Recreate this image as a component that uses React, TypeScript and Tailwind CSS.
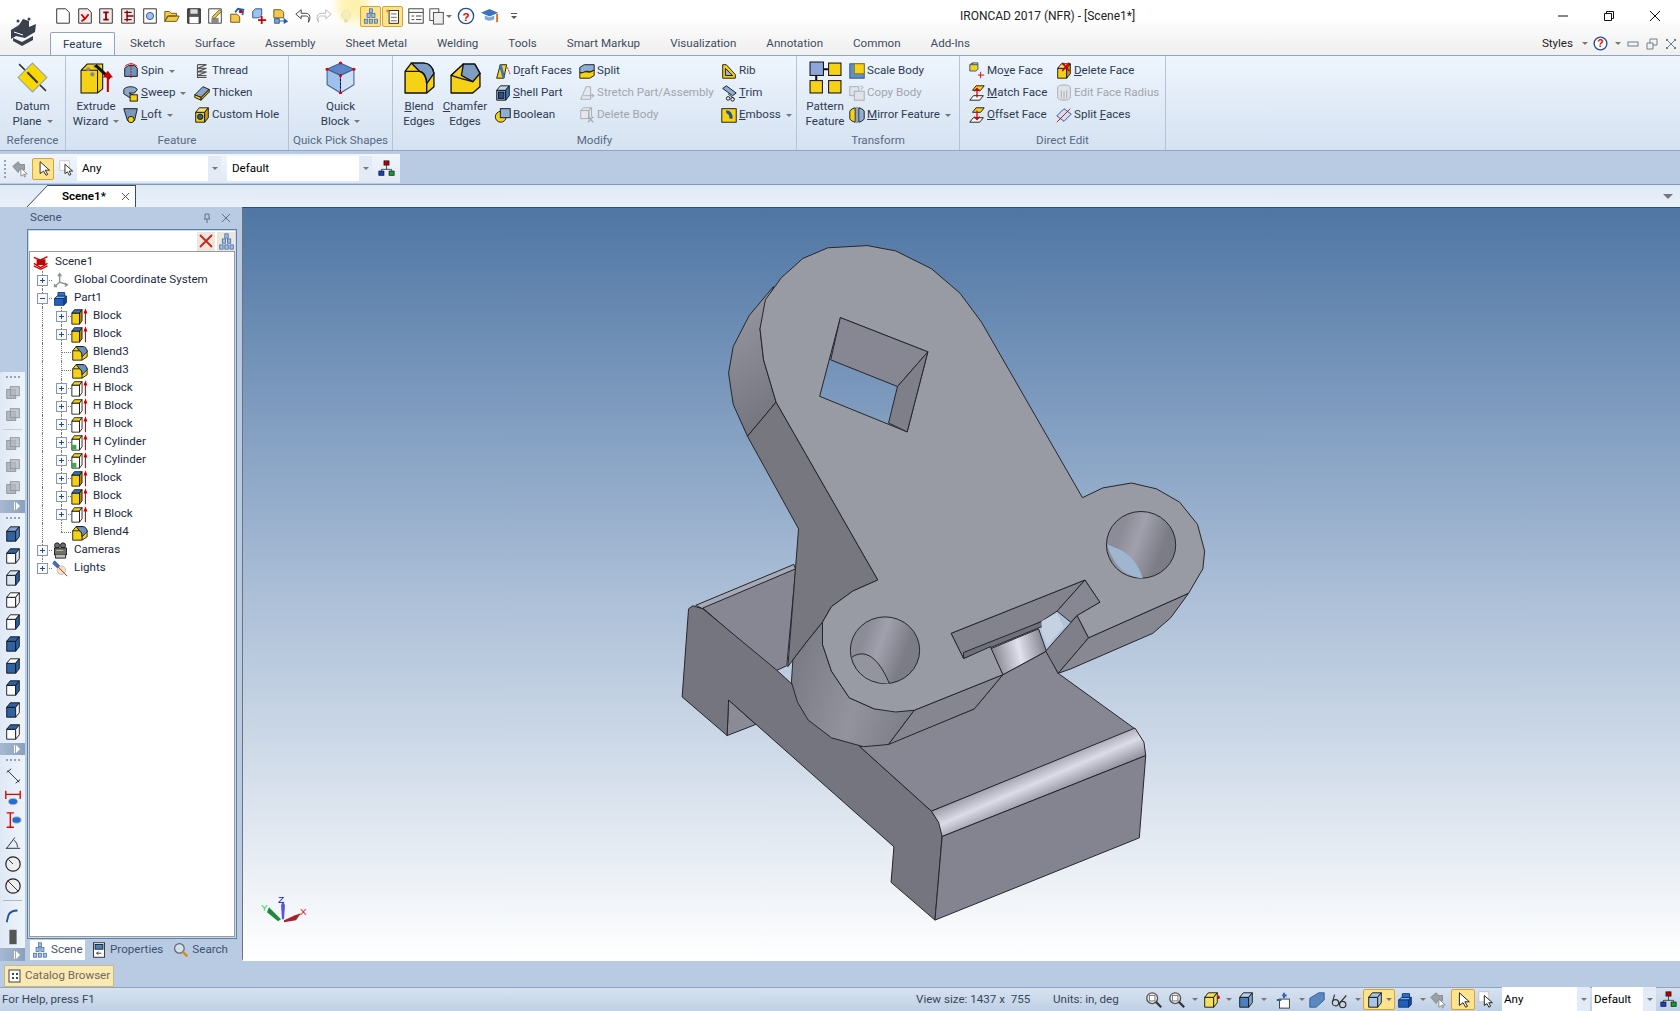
import type { ReactNode } from "react";

const Svg = ({ s = 18, v = 20, children }: { s?: number; v?: number; children: ReactNode }) => (
  <svg width={s} height={s} viewBox={`0 0 ${v} ${v}`} className="shrink-0">
    {children}
  </svg>
);

const cube = (f: string, t: string, r: string) => (
  <g stroke="#111" strokeWidth="1" strokeLinejoin="round">
    <path d="M3 7h10v11H3z" fill={f} />
    <path d="M3 7l4-5h10l-4 5z" fill={t} />
    <path d="M13 7l4-5v11l-4 5z" fill={r} />
  </g>
);

// the tall narrow box used in the scene tree
const tall = (f: string, t: string, r: string) => (
  <g stroke="#111" strokeWidth="1" strokeLinejoin="round">
    <path d="M1 6h9v13H1z" fill={f} />
    <path d="M1 6l3-4h9l-3 4z" fill={t} />
    <path d="M10 6l3-4v13l-3 4z" fill={r} />
  </g>
);

const redArrow = <path d="M17 19V5M15.500 6l1.500-4 1.500 4z" stroke="#d00000" strokeWidth="1.200" fill="#d00000" />;
const dot = (x: number, y: number) => <circle cx={x} cy={y} r="1.500" fill="#e00000" />;

const blendIco = (
  <g stroke="#111" strokeLinejoin="round">
    <path d="M2 8l4-5h8l5 5v7l-6 4H2z" fill="#f5d216" />
    <path d="M2 8h9c2 2 2 6 2 11" fill="none" />
    <path d="M6 3h8c3 0 5 3 5 6l-6 6c0-4-1-6-3-7z" fill="#6a8fb9" />
  </g>
);

const I: Record<string, ReactNode> = {
  block: <>{tall("#f5cf13", "#3a74bf", "#a98a10")}{redArrow}</>,
  hblock: <>{tall("#fff", "#f5d216", "#fff")}{redArrow}</>,
  hcyl: (
    <>
      {tall("#fff", "#f5d216", "#fff")}
      {redArrow}
      <rect x="1" y="13" width="5" height="5" fill="#2fb24a" stroke="#777" strokeWidth=".5" />
    </>
  ),
  blend: blendIco,
  spin: (
    <>
      <path d="M3 7l4-3h7l3 3v9H3z" fill="#6f93bd" stroke="#111" />
      <path d="M3 5c4-4 10-4 14 0" fill="none" stroke="#d00000" />
      <path d="M10 1v18" stroke="#d00000" strokeDasharray="2 1" />
    </>
  ),
  sweep: (
    <>
      <path d="M2 6c3-4 12-4 15 0l-3 4H8l6 3-4 3-8-5z" fill="#8fa9c9" stroke="#111" />
      <rect x="9" y="12" width="8" height="7" fill="#f5d216" stroke="#111" />
    </>
  ),
  loft: (
    <>
      <path d="M2 3h15l-3 13H6z" fill="#7a98bf" stroke="#111" />
      <circle cx="10" cy="15" r="3.500" fill="#f5d216" stroke="#111" />
    </>
  ),
  thread: (
    <g fill="none" stroke="#555" strokeWidth="1.300">
      <path d="M5 3h10L5 7h10L5 11h10L5 15h10" />
      <path d="M5 3v14h10" />
    </g>
  ),
  thicken: (
    <g stroke="#111" strokeLinejoin="round">
      <path d="M2 12l9-9 7 3-9 9z" fill="#8aa6c8" />
      <path d="M2 12l7 3v3l-7-3z" fill="#f5d216" />
      <path d="M9 15l9-9v3l-9 9z" fill="#c99f10" />
    </g>
  ),
  hole: (
    <>
      {cube("#f5cf13", "#f5e070", "#c99f10")}
      <circle cx="8" cy="12" r="3" fill="#2a5ea8" stroke="#111" />
    </>
  ),
  draft: (
    <>
      <path d="M3 18L7 3h7l-3 15z" fill="#f5d216" stroke="#111" />
      <path d="M7 3l4 15" stroke="#3a74bf" strokeWidth="3" />
      <path d="M15 6l3 8" stroke="#d00000" strokeDasharray="2 1" />
    </>
  ),
  shell: (
    <>
      {cube("#8fb0d6", "#c0d4ea", "#3a74bf")}
      <rect x="5" y="9" width="6" height="7" fill="#24508e" stroke="#111" />
    </>
  ),
  boolean: (
    <>
      <circle cx="7.500" cy="12" r="6" fill="#f5d216" stroke="#111" />
      <rect x="7" y="3" width="11" height="10" fill="#8fb0d6" stroke="#111" />
    </>
  ),
  split: (
    <g stroke="#111" strokeLinejoin="round">
      <path d="M2 6l5-3h11v6l-5 2-3-1-4 2H2z" fill="#8fb0d6" />
      <path d="M2 12c3 1 5-2 8-1s5 0 8-2v6l-5 3H2z" fill="#f5d216" />
    </g>
  ),
  stretch: (
    <g stroke="#a6aab0" fill="#e4e8ee">
      <path d="M3 17L9 3h5v14z" />
      <path d="M6 13h12M15 11l3 2-3 2" fill="none" />
    </g>
  ),
  delbody: (
    <g stroke="#a6aab0" fill="#e4e8ee">
      <path d="M3 5h9v9H3zM3 5l3-3h9l-3 3zM12 5l3-3v9l-3 3z" />
      <path d="M11 12l6 6M17 12l-6 6" fill="none" strokeWidth="1.400" />
    </g>
  ),
  rib: (
    <>
      <path d="M3 18V3l4 0 10 11v4z" fill="#f5d216" stroke="#111" />
      <path d="M6 15V7l8 8z" fill="#9fb4cd" stroke="#111" />
    </>
  ),
  trim: (
    <>
      <path d="M3 5l4-3 11 8-4 3z" fill="#8fb0d6" stroke="#111" />
      <path d="M9 11l6 5" stroke="#111" />
      <circle cx="9" cy="16" r="2" fill="none" stroke="#111" />
      <circle cx="14" cy="17" r="2" fill="none" stroke="#111" />
    </>
  ),
  emboss: (
    <>
      <rect x="2" y="3" width="16" height="15" fill="#f5d216" stroke="#111" />
      <path d="M7 7c3-1 6 3 5 7" fill="none" stroke="#24508e" strokeWidth="3.500" />
    </>
  ),
  scale: (
    <>
      <rect x="2" y="2" width="16" height="16" fill="#5f8fc6" stroke="#24508e" />
      <rect x="7" y="2" width="11" height="11" fill="#f5d216" stroke="#8a7a10" />
    </>
  ),
  copy: (
    <g stroke="#a6aab0" fill="#dfe4ea">
      <rect x="2" y="3" width="10" height="10" />
      <rect x="7" y="8" width="11" height="10" />
      <path d="M14 2l3 2-3 2" fill="none" />
    </g>
  ),
  mirror: (
    <g stroke="#111">
      <path d="M2 6c0-2 5-4 6-4v16c-1 0-6-2-6-4z" fill="#f5d216" />
      <path d="M18 6c0-2-5-4-6-4v16c1 0 6-2 6-4z" fill="#8fb0d6" />
      <path d="M10 1v18" stroke="#24508e" />
    </g>
  ),
  move: (
    <>
      <path d="M2 3l3-2h6v7l-2 2H2z" fill="#f5d216" stroke="#24508e" />
      <path d="M5 1v2H2M5 3h6" fill="none" stroke="#24508e" />
      <path d="M14 11v7M11 14.500h7" stroke="#d00000" />
    </>
  ),
  delface: (
    <>
      {cube("#f5cf13", "#f5e070", "#c99f10")}
      <path d="M8 1l8 9M16 1l-8 9" stroke="#d00000" strokeWidth="2" />
    </>
  ),
  match: (
    <>
      <path d="M5 7l4-5h9l-4 5z" fill="#f5d216" stroke="#111" />
      <path d="M2 18l4-5h11l-4 5z" fill="#fff" stroke="#111" />
      <path d="M10 5v10M7 8l3-3 3 3" stroke="#d00000" fill="none" strokeWidth="1.400" />
    </>
  ),
  offset: (
    <>
      <path d="M5 7l4-5h9l-4 5z" fill="#f5d216" stroke="#111" />
      <path d="M2 18l4-5h11l-4 5z" fill="#fff" stroke="#111" />
      <path d="M10 5v10M7 12l3 3 3-3" stroke="#d00000" fill="none" strokeWidth="1.400" />
    </>
  ),
  radius: (
    <g stroke="#a6aab0" fill="#dfe4ea">
      <ellipse cx="10" cy="4" rx="7" ry="3" />
      <path d="M3 4v11c0 4 14 4 14 0V4" />
      <path d="M7 7v9M10 8v9M13 7v9" fill="none" />
    </g>
  ),
  splitf: (
    <>
      <path d="M2 11l8-8 8 6-8 8z" fill="#d4def0" stroke="#24508e" />
      <path d="M2 18L17 3" stroke="#d00000" />
    </>
  ),
  scene: (
    <g stroke="#d00000" strokeWidth="1.600" fill="none">
      <path d="M1 4l7 3M17 3l-8 4M1 11l8 5 8-5" />
      <path d="M5 7h9v5H5z" fill="#a01010" />
      <path d="M1 14l8 4 8-4" />
    </g>
  ),
  axes: (
    <g stroke="#8a8f98" strokeWidth="1.600" fill="none">
      <path d="M9 3v9l-6 5M9 12l9 3" />
      <path d="M7 5l2-3 2 3M3 14v3h3M15 13l3 2-3 2" />
    </g>
  ),
  part: (
    <g stroke="#0f2f66" strokeLinejoin="round">
      <path d="M3 10l3-3h11l-3 3z" fill="#7fb0ea" />
      <path d="M7 7V3h8v4z" fill="#2d74d4" />
      <path d="M3 10h11v8H3z" fill="#1f5fc0" />
      <path d="M14 10l3-3v8l-3 3z" fill="#164a9a" />
    </g>
  ),
  camera: (
    <g stroke="#111" fill="#6b6f78">
      <circle cx="6" cy="4" r="3" />
      <circle cx="13" cy="4" r="3" />
      <rect x="3" y="7" width="14" height="8" />
      <path d="M5 10h8" stroke="#f5d216" />
      <path d="M4 15v4h12v-4" fill="#bbb" />
    </g>
  ),
  lights: (
    <g>
      <path d="M3 1l6 6-2 3-6-6z" fill="#3a74bf" stroke="#24508e" />
      <circle cx="11" cy="12" r="5" fill="#eee6c8" stroke="#bbb" />
      <path d="M6 7l12 12" stroke="#d00000" />
    </g>
  ),
  search: (
    <g>
      <circle cx="8" cy="8" r="6" fill="#cfe0f5" stroke="#666" strokeWidth="1.500" />
      <path d="M12 12l6 6" stroke="#d09020" strokeWidth="3" />
    </g>
  ),
  tree: (
    <g fill="#9fbde2" stroke="#2d5c9e" strokeWidth=".8">
      <rect x="8" y="1" width="4" height="5" />
      <rect x="5" y="7" width="4" height="5" />
      <rect x="11" y="7" width="4" height="5" />
      <rect x="2" y="14" width="4" height="5" />
      <rect x="8" y="14" width="4" height="5" />
      <rect x="14" y="14" width="4" height="5" />
    </g>
  ),
  props: (
    <g stroke="#111" fill="#fff">
      <rect x="3" y="1" width="14" height="18" />
      <rect x="5" y="3" width="10" height="6" fill="#4d7fc0" />
      <path d="M13 14H7M9 12l-2 2 2 2" fill="none" />
    </g>
  ),
  net: (
    <g stroke="#111" strokeWidth=".8">
      <path d="M10 6v5M4 14v-3h12v3" fill="none" />
      <rect x="7" y="1" width="6" height="5" fill="#c00000" />
      <rect x="1" y="13" width="6" height="5" fill="#1040d0" />
      <rect x="13" y="13" width="6" height="5" fill="#10a030" />
    </g>
  ),
  arrow: <path d="M6 2v14l4-3 3 5 2-1-3-5h5z" fill="#fff" stroke="#111" />,
  arrowSel: (
    <>
      <rect x="1" y="1" width="11" height="11" fill="#fff" stroke="#aaa" strokeWidth=".6" />
      <path d="M7 5v11l3-2 2 4 2-1-2-4h4z" fill="#fff" stroke="#111" />
    </>
  ),
  hand: (
    <>
      <path d="M2 7l6-5 2 3h5v6H9l-1 3z" fill="#9aa0a8" stroke="#888" />
      <path d="M11 9v9l3-2 1 3 1-.5-1-3h3z" fill="#fff" stroke="#888" />
    </>
  ),
  lens: (
    <g>
      <circle cx="8" cy="8" r="6" fill="#e9e9e9" stroke="#555" strokeWidth="1.500" />
      <rect x="5" y="5" width="6" height="6" fill="#fff" stroke="#777" />
      <path d="M12 12l6 6" stroke="#333" strokeWidth="2.500" />
    </g>
  ),
};

const qat: ReactNode[] = [
  <path d="M3 2h10l4 4v12H3z" fill="#fff" stroke="#222" />,
  <><path d="M3 2h10l4 4v12H3z" fill="#f4ecec" stroke="#222" /><path d="M6 8l4 5 4-5M10 13l-4 3" stroke="#c00" strokeWidth="2" fill="none" /></>,
  <><path d="M3 2h14v16H3z" fill="#f4ecec" stroke="#222" /><path d="M7 6h6M10 6v8M7 14h6" stroke="#800" strokeWidth="2" /></>,
  <><path d="M3 2h14v16H3z" fill="#f4ecec" stroke="#222" /><path d="M6 6h8M8 10h8M6 14h8M9 4v12" stroke="#800" strokeWidth="1.600" /></>,
  <><path d="M3 2h14v16H3z" fill="#fff" stroke="#222" /><circle cx="10" cy="10" r="4" fill="#9fc4ea" stroke="#24508e" /></>,
  <path d="M2 16V5h5l2 2h6v3H6l-4 6 3-6h13l-3 6z" fill="#f2c94c" stroke="#6a5410" />,
  <><path d="M3 2h14v16H3z" fill="#555" stroke="#111" /><rect x="6" y="2.500" width="8" height="5" fill="#ddd" /><rect x="5" y="11" width="10" height="7" fill="#fff" /></>,
  <><path d="M3 2h14v16H3z" fill="#fff" stroke="#333" /><rect x="6" y="12" width="8" height="6" fill="#888" /><path d="M7 11l8-8 2 2-8 8z" fill="#f2c94c" stroke="#6a5410" /></>,
  <><path d="M3 17V8h7l3 3v6z" fill="#f2c94c" stroke="#6a5410" /><path d="M8 6l3-4 6 1-1 6" fill="none" stroke="#1f5fc0" strokeWidth="2" /><circle cx="14" cy="5" r="2" fill="#c00" /></>,
  <><path d="M3 5l3-3h7v7l-3 3H3z" fill="#9fc4ea" stroke="#24508e" /><path d="M13 10v9M9 14.500h9" stroke="#c00" strokeWidth="2" /></>,
  <><path d="M2 12V3h8l3 3v6z" fill="#f2c94c" stroke="#6a5410" /><path d="M8 15h5v-3l5 4-5 3v-3H8z" fill="#1f5fc0" /><rect x="3" y="13" width="5" height="5" fill="#7fa7d8" stroke="#24508e" /></>,
  <path d="M8 3L2 8l6 5v-3h5c3 0 4 2 3 7 3-5 2-10-3-10H8z" fill="#fff" stroke="#333" />,
  <path d="M12 3l6 5-6 5v-3H7c-3 0-4 2-3 7-3-5-2-10 3-10h5z" fill="#fff" stroke="#b5b5b5" />,
  <><circle cx="10" cy="9" r="5" fill="#f6eeb8" stroke="#efe3a0" /><rect x="8" y="14" width="4" height="3" fill="#e6dca8" /></>,
];

const Label = ({ children, off }: { children: ReactNode; off?: boolean }) => (
  <span className={off ? "whitespace-nowrap text-[#a2a5aa]" : "whitespace-nowrap text-[#2c3b52]"}>{children}</span>
);

const Caret = () => <span className="ml-[5px] inline-block border-x-[3px] border-t-[3px] border-x-transparent border-t-[#777] align-middle" />;

const Row = ({ icon, children, off, caret }: { icon: string; children: ReactNode; off?: boolean; caret?: boolean }) => (
  <div className="flex h-[22px] items-center">
    <span className="flex w-[19px] shrink-0">
      <Svg>{I[icon]}</Svg>
    </span>
    <Label off={off}>{children}</Label>
    {caret && <Caret />}
  </div>
);

const Big = ({ icon, a, b, w, caret }: { icon: ReactNode; a: ReactNode; b: ReactNode; w: string; caret?: boolean }) => (
  <div className={`flex flex-col items-center ${w}`}>
    <div className="flex h-[43px] items-start pt-[5px]">
      <Svg s={33} v={32}>{icon}</Svg>
    </div>
    <div className="flex flex-col items-center leading-[15px] text-[#2c3b52]">
      <span className="whitespace-nowrap">{a}</span>
      <span className="whitespace-nowrap">{b}{caret && <Caret />}</span>
    </div>
  </div>
);

const Group = ({ title, w, children }: { title: string; w: string; children: ReactNode }) => (
  <div className={`flex h-full shrink-0 flex-col border-r border-[#b3c4d9] ${w}`}>
    <div className="flex flex-1">{children}</div>
    <div className="h-[18px] pb-[1px] text-center leading-[16px] text-[#566a85]">{title}</div>
  </div>
);

const tabs = ["Sketch", "Surface", "Assembly", "Sheet Metal", "Welding", "Tools", "Smart Markup", "Visualization", "Annotation", "Common", "Add-Ins"];

const Combo = ({ label, w, pad = "pl-[5px]" }: { label: string; w: string; pad?: string }) => (
  <div className={`flex h-[25px] shrink-0 items-center bg-white text-black ${pad} ${w}`}>
    <span className="flex-1">{label}</span>
    <span className="flex h-full w-[13px] items-center justify-center bg-[#e3ecf6]">
      <span className="border-x-[3px] border-t-[3px] border-x-transparent border-t-[#777]" />
    </span>
  </div>
);

type Node = { d: number; i: string; t: string; x?: "+" | "-" | ""; last?: boolean };

const nodes: Node[] = [
  { d: 0, i: "scene", t: "Scene1" },
  { d: 1, i: "axes", t: "Global Coordinate System", x: "+" },
  { d: 1, i: "part", t: "Part1", x: "-" },
  { d: 2, i: "block", t: "Block", x: "+" },
  { d: 2, i: "block", t: "Block", x: "+" },
  { d: 2, i: "blend", t: "Blend3", x: "" },
  { d: 2, i: "blend", t: "Blend3", x: "" },
  { d: 2, i: "hblock", t: "H Block", x: "+" },
  { d: 2, i: "hblock", t: "H Block", x: "+" },
  { d: 2, i: "hblock", t: "H Block", x: "+" },
  { d: 2, i: "hcyl", t: "H Cylinder", x: "+" },
  { d: 2, i: "hcyl", t: "H Cylinder", x: "+" },
  { d: 2, i: "block", t: "Block", x: "+" },
  { d: 2, i: "block", t: "Block", x: "+" },
  { d: 2, i: "hblock", t: "H Block", x: "+" },
  { d: 2, i: "blend", t: "Blend4", x: "", last: true },
  { d: 1, i: "camera", t: "Cameras", x: "+" },
  { d: 1, i: "lights", t: "Lights", x: "+", last: true },
];

const Guide = () => (
  <span className="h-full w-[19px] shrink-0 pl-[9px]">
    <span className="block h-full border-l border-dotted border-[#777]" />
  </span>
);

const Toggle = ({ x, last }: { x: string; last?: boolean }) => (
  <span className="relative flex h-full w-[19px] shrink-0 items-center">
    <span className={`absolute left-[9px] top-0 border-l border-dotted border-[#777] ${last ? "h-[9px]" : "h-full"}`} />
    <span className="absolute left-[9px] top-[9px] w-[10px] border-t border-dotted border-[#777]" />
    {x && (
      <span className="absolute left-[4px] top-[4px] flex h-[11px] w-[11px] items-center justify-center border border-[#8b98a8] bg-[#f6f8fb] text-[#2b4a80]">
        <span className="absolute h-px w-[5px] bg-[#2b4a80]" />
        {x === "+" && <span className="absolute h-[5px] w-px bg-[#2b4a80]" />}
      </span>
    )}
  </span>
);

const TreeRow = ({ n }: { n: Node }) => (
  <div className="flex h-[18px] items-center">
    {n.d === 2 && <Guide />}
    {n.d > 0 && <Toggle x={n.x ?? ""} last={n.last} />}
    <span className="flex w-[17px] shrink-0">
      <Svg s={17}>{I[n.i]}</Svg>
    </span>
    <span className="ml-[5px] whitespace-nowrap text-[#1c2a44]">{n.t}</span>
  </div>
);

const Grip = () => (
  <div className="flex h-[10px] items-center justify-center gap-[2px]">
    {[0, 1, 2, 3].map((i) => (
      <span key={i} className="h-[2px] w-[2px] bg-[#8fa4c0]" />
    ))}
  </div>
);

const Handle = () => (
  <div className="flex h-[14px] items-center justify-end bg-linear-to-r from-[#a7b9d1] to-[#8aa0bd] pr-[5px]">
    <span className="h-[8px] w-px bg-white" />
    <span className="ml-px border-y-[4px] border-l-[4px] border-y-transparent border-l-white" />
  </div>
);

const Tool = ({ children }: { children: ReactNode }) => (
  <div className="flex h-[22px] items-center justify-center">
    <Svg s={18}>{children}</Svg>
  </div>
);

const grayCube = (
  <g stroke="#8d939b" fill="#b4b9bf">
    <rect x="3" y="6" width="10" height="10" />
    <rect x="7" y="3" width="10" height="10" fillOpacity=".7" />
  </g>
);

const blueFace = (k: number) => {
  const faces = [
    ["#2d62a5", "#7fa6d4", "#4b7fbd"],
    ["#fff", "#2d62a5", "#dbe6f3"],
    ["#dbe6f3", "#dbe6f3", "#2d62a5"],
    ["#fff", "#fff", "#fff"],
    ["#fff", "#fff", "#2d62a5"],
    ["#2d62a5", "#2d62a5", "#2d62a5"],
    ["#2d62a5", "#fff", "#2d62a5"],
    ["#fff", "#2d62a5", "#2d62a5"],
    ["#2d62a5", "#2d62a5", "#fff"],
    ["#fff", "#2d62a5", "#fff"],
  ][k];
  return cube(faces[0], faces[1], faces[2]);
};

const dims: ReactNode[] = [
  <path d="M3 6l5-4M4 4l13 13M13 18l5-4" stroke="#222" fill="none" />,
  <><path d="M2 2v9M18 2v9M2 6h16" stroke="#e00000" strokeWidth="1.500" /><ellipse cx="10" cy="14" rx="5" ry="3.500" fill="#1f6fd4" stroke="#bbb" /></>,
  <><path d="M3 2h8M3 18h8M7 2v16" stroke="#e00000" strokeWidth="1.500" /><ellipse cx="14" cy="10" rx="5" ry="3.500" fill="#1f6fd4" stroke="#bbb" /></>,
  <path d="M2 17h16M3 17L12 5M11 8c3 2 4 5 4 8" stroke="#222" fill="none" />,
  <><circle cx="10" cy="10" r="8" fill="#eee" stroke="#222" strokeWidth="1.300" /><path d="M10 10L5 5" stroke="#222" /></>,
  <><circle cx="10" cy="10" r="8" fill="#eee" stroke="#222" strokeWidth="1.300" /><path d="M4 4l12 12" stroke="#222" /></>,
];

const bottomIcons: { c: ReactNode; w: string; caret?: boolean; on?: boolean }[] = [
  { c: I.lens, w: "w-[23px]" },
  { c: I.lens, w: "w-[34px]", caret: true },
  { c: <>{cube("#f5e25a", "#f5e25a", "#f5e25a")}<path d="M17 7h3M18.500 5v4" stroke="#e00000" strokeWidth="1.500" /></>, w: "w-[35px]", caret: true },
  { c: cube("#4b7fbd", "#b9d0ea", "#86a9d3"), w: "w-[38px]", caret: true },
  { c: <><rect x="5" y="9" width="11" height="10" fill="#fff" stroke="#333" /><path d="M8 5h5M10 2v6M2 10h5" stroke="#2d62a5" strokeWidth="2" /></>, w: "w-[33px]", caret: true },
  { c: <path d="M2 18V8l10-6h6v8L9 18z" fill="#5b89bf" stroke="#2d5c9e" />, w: "w-[23px]" },
  { c: <g fill="none" stroke="#333" strokeWidth="1.300"><circle cx="5" cy="13" r="3.500" /><circle cx="13" cy="15" r="3.500" /><path d="M2 11l2-7M9 14l8-9" /></g>, w: "w-[32px]", caret: true },
  { c: cube("#a8c4e6", "#a8c4e6", "#a8c4e6"), w: "w-[33px]", caret: true, on: true },
  { c: I.part, w: "w-[33px]", caret: true },
  { c: I.hand, w: "w-[22px]" },
  { c: I.arrow, w: "w-[27px]", on: true },
  { c: I.arrowSel, w: "w-[22px]" },
];

const M = "#74757f";
const plate =
  "M280 220L295 155 340 105 400 62 470 38 580 33 660 45 760 85 840 140 900 205 1183 600 1240 578 1320 567 1390 580 1455 610 1505 660 1525 720 1520 760 1480 815 1200 915 1168 865 1232 835 1190 785 815 905 850 962 925 935 960 998 712 1078 660 1082 600 1075 530 1050 480 990 455 930 455 880 480 845 540 810 610 785 325 385 290 290Z M505 195L750 272 692 452 447 372Z";

const Model = () => (
  <svg viewBox="243 207 1437 754" preserveAspectRatio="none" className="block h-full w-full">
    <defs>
      <linearGradient id="roll" gradientUnits="userSpaceOnUse" x1="1040" y1="1190" x2="1075" y2="1290">
        <stop offset="0" stopColor="#80818c" />
        <stop offset=".5" stopColor="#dcdce8" />
        <stop offset="1" stopColor="#7c7d88" />
      </linearGradient>
      <linearGradient id="roll2" gradientUnits="userSpaceOnUse" x1="930" y1="960" x2="1080" y2="920">
        <stop offset="0" stopColor="#80818c" />
        <stop offset=".5" stopColor="#e2e2ee" />
        <stop offset="1" stopColor="#7c7d88" />
      </linearGradient>
      <linearGradient id="lobe" gradientUnits="userSpaceOnUse" x1="200" y1="200" x2="320" y2="420">
        <stop offset="0" stopColor="#92939d" />
        <stop offset="1" stopColor="#74757f" />
      </linearGradient>
      <linearGradient id="boss" gradientUnits="userSpaceOnUse" x1="380" y1="1000" x2="680" y2="1120">
        <stop offset="0" stopColor="#7c7d87" />
        <stop offset=".55" stopColor="#92939d" />
        <stop offset="1" stopColor="#7e7f89" />
      </linearGradient>
      <linearGradient id="bore" gradientUnits="userSpaceOnUse" x1="1290" y1="680" x2="1400" y2="730">
        <stop offset="0" stopColor="#8b8c97" />
        <stop offset=".4" stopColor="#a0a1ac" />
        <stop offset="1" stopColor="#7b7c86" />
      </linearGradient>
      <linearGradient id="bore2" gradientUnits="userSpaceOnUse" x1="570" y1="915" x2="680" y2="965">
        <stop offset="0" stopColor="#8b8c97" />
        <stop offset=".4" stopColor="#a0a1ac" />
        <stop offset="1" stopColor="#7b7c86" />
      </linearGradient>
    </defs>
    <g transform="translate(660 230) scale(0.35714 0.44643)" stroke="#26262c" strokeWidth="1" strokeLinejoin="round">
      <polygon vectorEffect="non-scaling-stroke" fill="#a7a9b6" points="100,842 375,750 380,762 120,850" />
      <polygon vectorEffect="non-scaling-stroke" fill="#868792" points="120,848 380,760 355,978 322,990" />
      <polygon vectorEffect="non-scaling-stroke" fill="#8a8b96" points="192,1055 268,1110 188,1135" />
      <polygon vectorEffect="non-scaling-stroke" fill={M} points="92,843 120,850 330,990 560,1160 760,1305 785,1335 790,1360 770,1550 647,1465 655,1385 192,1055 188,1135 62,1048 80,850" />
      <polygon vectorEffect="non-scaling-stroke" fill="#868792" points="560,1160 650,1150 880,1075 960,998 1082,945 1115,995 1330,1120 760,1305" />
      <polygon vectorEffect="non-scaling-stroke" fill="url(#roll)" points="760,1305 1330,1118 1355,1150 1360,1180 790,1362 780,1330" />
      <polygon vectorEffect="non-scaling-stroke" fill="#83848f" points="790,1362 1360,1180 1342,1365 770,1550" />
      <polygon vectorEffect="non-scaling-stroke" fill="url(#lobe)" points="318,125 280,220 290,290 325,385 245,462 205,390 192,320 205,260 250,190" />
      <polygon vectorEffect="non-scaling-stroke" fill="#76777f" points="325,385 610,785 540,810 480,845 455,880 410,925 372,965 358,980 388,670 245,462" />
      <polygon vectorEffect="non-scaling-stroke" fill="url(#boss)" points="372,965 368,1015 385,1060 415,1100 480,1140 570,1160 640,1155 712,1078 600,1075 530,1050 480,990 455,930 455,880 410,925" />
      <polygon vectorEffect="non-scaling-stroke" fill="#858690" points="640,1155 880,1075 960,998 712,1078" />
      <polygon vectorEffect="non-scaling-stroke" fill="#82838d" points="815,905 1190,785 1112,855 1068,878 850,962" />
      <polygon vectorEffect="non-scaling-stroke" fill="#6f7079" points="850,948 1070,878 1075,888 850,962" />
      <polygon vectorEffect="non-scaling-stroke" fill="url(#roll2)" points="925,940 1060,895 1082,945 960,998" />
      <polygon fill="#c6d2e2" stroke="none" points="1068,878 1112,860 1130,890 1085,930 1070,905" />
      <polygon vectorEffect="non-scaling-stroke" fill="#868792" points="1112,855 1190,785 1232,835 1168,865 1150,880" />
      <polygon vectorEffect="non-scaling-stroke" fill="#7e7f89" points="1080,945 1168,865 1200,915 1115,995" />
      <polygon vectorEffect="non-scaling-stroke" fill="#878892" points="1200,915 1480,815 1430,870 1380,905 1150,985 1115,995" />
      <path vectorEffect="non-scaling-stroke" fill="#989aa4" fillRule="evenodd" d={plate} />
      <polygon vectorEffect="non-scaling-stroke" fill="#868792" points="505,195 750,272 665,350 478,290" />
      <polygon vectorEffect="non-scaling-stroke" fill="#7e7f89" points="750,272 692,452 640,432 665,350" />
      <ellipse vectorEffect="non-scaling-stroke" cx="1347" cy="706" rx="97" ry="75" fill="url(#bore)" />
      <path fill="#9fb6d1" stroke="none" d="M1252 705C1285 715 1330 725 1352 781 1305 778 1268 750 1252 705Z" />
      <ellipse vectorEffect="non-scaling-stroke" cx="630" cy="943" rx="97" ry="75" fill="url(#bore2)" />
      <path fill="#93949e" stroke="none" d="M538 958C585 935 620 975 642 1018 600 1018 555 998 538 958Z" />
      <path vectorEffect="non-scaling-stroke" fill="none" d="M538 958C585 935 620 975 642 1018" />
    </g>
    <g>
      <path d="M282 921l-1-14 2-4 2 4-1 14z" fill="#5a55d8" />
      <path d="M281 921l-12-12-2 5 11 9z" fill="#1f8a3c" />
      <path d="M284 922l11-5 6-2-5 7-12 2z" fill="#a8242c" />
      <text x="278" y="905" fontSize="10" fill="#0a14e0" fontFamily="'Liberation Sans', sans-serif">Z</text>
      <text x="261" y="913" fontSize="10" fill="#10e040" fontFamily="'Liberation Sans', sans-serif">Y</text>
      <text x="300" y="917" fontSize="10" fill="#e02020" fontFamily="'Liberation Sans', sans-serif">X</text>
    </g>
  </svg>
);

export default function App() {
  return (
    <div className="flex h-[1011px] w-[1680px] flex-col overflow-hidden bg-[#b9cbe3] text-[11.600px] font-['Roboto',sans-serif]">
      {/* title + tabs */}
      <div className="flex h-[55px] shrink-0 bg-linear-to-b from-white from-30% to-[#f1f1f1] to-90%">
        <div className="w-[50px] shrink-0 pl-[10px] pt-[16px]">
          <svg width="28" height="30" viewBox="0 0 28 30">
            <path d="M1 14l8-5 4-6 6 2v6l7-3-1 8-10 6-9-2-5 3z" fill="#39414c" />
            <path d="M3 22l9 4 11-6v4l-11 6-9-5z" fill="#39414c" />
            <circle cx="8" cy="5" r="1.500" fill="#39414c" />
            <circle cx="19" cy="3" r="1.500" fill="#39414c" />
            <path d="M4 16l9 3" stroke="#fff" />
          </svg>
        </div>
        <div className="flex flex-1 flex-col">
          <div className="flex h-[32px] items-center">
            <div className="relative flex w-[482px] shrink-0 items-center pl-[2px]">
              <span className="absolute left-[287px] top-[-16px] h-[32px] w-[32px] rounded-full bg-[#fff2b0] blur-[5px]" />
              {qat.map((q, i) => (
                <span key={i} className="relative flex w-[21.800px] shrink-0 justify-center">
                  <Svg s={18}>{q}</Svg>
                </span>
              ))}
              <span className="relative ml-[3px] flex h-[21px] w-[21px] items-center justify-center rounded-[2px] border border-[#d9a52e] bg-[#fde38d]">
                <Svg s={16}>{I.tree}</Svg>
              </span>
              <span className="relative ml-[1px] flex h-[21px] w-[21px] items-center justify-center rounded-[2px] border border-[#d9a52e] bg-[#fde38d]">
                <Svg s={17}>
                  <rect x="6" y="3" width="11" height="15" fill="#fff" stroke="#111" />
                  <path d="M8 7h7M8 11h7M8 15h7" stroke="#555" />
                  <path d="M3 2l3 3M6 2L3 5" stroke="#d09020" strokeWidth="1.500" />
                </Svg>
              </span>
              <span className="relative ml-[2px] flex w-[21px] justify-center">
                <Svg s={18}>
                  <rect x="2" y="2" width="16" height="16" fill="#fff" stroke="#333" />
                  <path d="M2 6h16M5 10h3M10 10h6M5 14h3M10 14h6" stroke="#333" />
                </Svg>
              </span>
              <span className="relative ml-[2px] flex items-center">
                <Svg s={18}>
                  <rect x="2" y="2" width="10" height="13" fill="#fff" stroke="#444" />
                  <rect x="6" y="6" width="11" height="13" fill="#eee" stroke="#444" />
                </Svg>
                <span className="border-x-[3px] border-t-[3px] border-x-transparent border-t-[#777]" />
              </span>
              <span className="relative ml-[5px] flex">
                <Svg s={18}>
                  <circle cx="10" cy="10" r="8.500" fill="#fff" stroke="#24508e" strokeWidth="1.500" />
                  <text x="10" y="15" fontSize="13" fontWeight="700" textAnchor="middle" fill="#e00000" fontFamily="'Liberation Sans', sans-serif">?</text>
                </Svg>
              </span>
              <span className="relative ml-[5px] flex">
                <Svg s={19}>
                  <path d="M1 6l9-4 9 4-9 4z" fill="#3a74bf" />
                  <path d="M5 9v4c3 2 7 2 10 0V9l-5 2z" fill="#7fa7d8" />
                  <path d="M18 7v9" stroke="#e07020" strokeWidth="2" />
                </Svg>
              </span>
              <span className="relative ml-[12px] flex flex-col items-center gap-[2px]">
                <span className="h-px w-[6px] bg-[#555]" />
                <span className="border-x-[3px] border-t-[3px] border-x-transparent border-t-[#555]" />
              </span>
            </div>
            <div className="ml-[428px] w-[175px] whitespace-nowrap text-[12px] text-[#222]">IRONCAD 2017 (NFR) - [Scene1*]</div>
            <div className="ml-auto flex items-center text-[#111]">
              <svg width="14" height="14" viewBox="0 0 14 14" className="mr-[32px]"><path d="M2 7h10" stroke="#111" /></svg>
              <svg width="14" height="14" viewBox="0 0 14 14" className="mr-[32px]"><path d="M2.500 4.500h7v7h-7zM4.500 4.500v-2h7v7h-2" fill="none" stroke="#111" /></svg>
              <svg width="14" height="14" viewBox="0 0 14 14" className="mr-[18px]"><path d="M2 2l10 10M12 2L2 12" stroke="#111" /></svg>
            </div>
          </div>
          <div className="flex h-[23px]">
            <div className="flex h-[24px] w-[65px] items-center justify-center rounded-t-[2px] border border-b-0 border-[#8ea5c3] bg-linear-to-b from-white to-[#eef5fd] text-[#2c3b52]">Feature</div>
            {tabs.map((t) => (
              <div key={t} className="flex items-center px-[15px] whitespace-nowrap text-[#3d4c61]">{t}</div>
            ))}
            <div className="ml-auto flex items-center pr-[3px]">
              <span className="text-[#222]">Styles</span>
              <span className="ml-[9px] border-x-[3px] border-t-[3px] border-x-transparent border-t-[#777]" />
              <span className="ml-[5px] flex">
                <Svg s={15}>
                  <circle cx="10" cy="10" r="8.500" fill="#fff" stroke="#24508e" strokeWidth="1.800" />
                  <text x="10" y="15" fontSize="14" fontWeight="700" textAnchor="middle" fill="#e00000" fontFamily="'Liberation Sans', sans-serif">?</text>
                </Svg>
              </span>
              <span className="ml-[7px] border-x-[3px] border-t-[3px] border-x-transparent border-t-[#777]" />
              <svg width="12" height="12" viewBox="0 0 12 12" className="ml-[6px]"><rect x="1" y="4" width="10" height="4" fill="none" stroke="#6f7f92" /></svg>
              <svg width="12" height="12" viewBox="0 0 12 12" className="ml-[7px]"><path d="M1 5h6v6H1zM4 5V1h7v6H7" fill="none" stroke="#6f7f92" /></svg>
              <svg width="12" height="12" viewBox="0 0 12 12" className="ml-[7px]"><path d="M1 1l10 10M11 1L1 11M1 3l2-2M9 1l2 2M1 9l2 2M11 9l-2 2" fill="none" stroke="#6f7f92" /></svg>
            </div>
          </div>
        </div>
      </div>

      {/* ribbon */}
      <div className="flex h-[96px] shrink-0 border-y border-[#8ea5c3] bg-linear-to-b from-[#eef5fd] to-[#d5e2f1]">
        <Group title="Reference" w="w-[66px]">
          <Big
            w="w-full"
            a="Datum"
            b="Plane"
            caret
            icon={
              <>
                <path d="M3 3l26 26" stroke="#333" strokeWidth="1.500" />
                <path d="M16 2l14 14-14 14L2 16z" fill="#f8d800" stroke="#8aa0bb" />
                <path d="M11 11l10 10" stroke="#333" strokeWidth="2" />
              </>
            }
          />
        </Group>
        <Group title="Feature" w="w-[223px]">
          <Big
            w="ml-[4px] w-[52px]"
            a="Extrude"
            b="Wizard"
            caret
            icon={
              <>
                <path d="M1 9l6-6h15v24l-5 4H1z" fill="#f5d216" stroke="#111" />
                <path d="M1 9h16v22" fill="none" stroke="#111" />
                <circle cx="8" cy="8" r="2" fill="#888" />
                <circle cx="15" cy="5" r="2" fill="#888" />
                <circle cx="12" cy="13" r="2" fill="#888" />
                <path d="M15 4l14 13" stroke="#111" strokeWidth="3" />
                <path d="M27 30V12M24 15l3-4 3 4z" stroke="#d00000" strokeWidth="2" fill="#d00000" />
              </>
            }
          />
          <div className="w-[71px] pt-[4px]">
            <Row icon="spin" caret>Spin</Row>
            <Row icon="sweep" caret><u>S</u>weep</Row>
            <Row icon="loft" caret><u>L</u>oft</Row>
          </div>
          <div className="pt-[4px]">
            <Row icon="thread">Thread</Row>
            <Row icon="thicken">Thicken</Row>
            <Row icon="hole">Custom Hole</Row>
          </div>
        </Group>
        <Group title="Quick Pick Shapes" w="w-[104px]">
          <Big
            w="w-full"
            a="Quick"
            b="Block"
            caret
            icon={
              <>
                <path d="M3 8l13-6 13 6-13 6z" fill="#5f86c9" stroke="#3a5f96" />
                <path d="M3 8v15l13 8V14z" fill="#9fc0ea" stroke="#3a5f96" />
                <path d="M29 8v15l-13 8V14z" fill="#cfe0f5" stroke="#3a5f96" />
                <path d="M16 14v17" stroke="#111" strokeDasharray="2 1.500" />
                {dot(3, 8)}{dot(16, 2)}{dot(29, 8)}{dot(16, 14)}{dot(16, 31)}
              </>
            }
          />
        </Group>
        <Group title="Modify" w="w-[404px]">
          <Big
            w="ml-[3px] w-[46px]"
            a={<><u>B</u>lend</>}
            b="Edges"
            icon={
              <g stroke="#111" strokeWidth="1.300" strokeLinejoin="round">
                <path d="M2 10l6-8h12c5 0 9 4 10 10v13l-7 6H2z" fill="#f5d216" />
                <path d="M2 10h14c4 1 7 6 7 12v9" fill="#f5d216" />
                <path d="M8 2h12c6 0 9 5 10 10l-7 10c0-7-3-12-7-12z" fill="#7f9dc2" />
              </g>
            }
          />
          <Big
            w="w-[46px]"
            a={<><u>C</u>hamfer</>}
            b="Edges"
            icon={
              <g stroke="#111" strokeWidth="1.300" strokeLinejoin="round">
                <path d="M2 14v17h21l7-6V12l-5-9H14z" fill="#f5d216" />
                <path d="M2 14l12-11 9 5 7 4-7 8-11-3z" fill="#f5d216" />
                <path d="M14 3h11l5 9-7 8-11-6z" fill="#7f9dc2" />
              </g>
            }
          />
          <div className="ml-[6px] w-[84px] pt-[4px]">
            <Row icon="draft">D<u>r</u>aft Faces</Row>
            <Row icon="shell"><u>S</u>hell Part</Row>
            <Row icon="boolean">Boolean</Row>
          </div>
          <div className="w-[142px] pt-[4px]">
            <Row icon="split">Split</Row>
            <Row icon="stretch" off>Stretch Part/Assembly</Row>
            <Row icon="delbody" off>Delete Body</Row>
          </div>
          <div className="pt-[4px]">
            <Row icon="rib">Rib</Row>
            <Row icon="trim"><u>T</u>rim</Row>
            <Row icon="emboss" caret><u>E</u>mboss</Row>
          </div>
        </Group>
        <Group title="Transform" w="w-[163px]">
          <Big
            w="ml-[5px] w-[46px]"
            a="Pattern"
            b="Feature"
            icon={
              <g stroke="#111">
                <path d="M13 8h6M7 14v5" strokeWidth="2" />
                <rect x="1" y="1" width="13" height="13" fill="#8fa7d8" />
                <rect x="19" y="2" width="12" height="12" fill="#f5d216" />
                <rect x="1" y="19" width="12" height="12" fill="#f5d216" />
                <rect x="19" y="19" width="12" height="12" fill="#f5d216" />
              </g>
            }
          />
          <div className="pt-[4px]">
            <Row icon="scale">Scale Body</Row>
            <Row icon="copy" off>Copy Body</Row>
            <Row icon="mirror" caret><u>M</u>irror Feature</Row>
          </div>
        </Group>
        <Group title="Direct Edit" w="w-[206px]">
          <div className="ml-[8px] w-[87px] pt-[4px]">
            <Row icon="move">Mo<u>v</u>e Face</Row>
            <Row icon="match"><u>M</u>atch Face</Row>
            <Row icon="offset"><u>O</u>ffset Face</Row>
          </div>
          <div className="pt-[4px]">
            <Row icon="delface"><u>D</u>elete Face</Row>
            <Row icon="radius" off>Edit Face Radius</Row>
            <Row icon="splitf">Split <u>F</u>aces</Row>
          </div>
        </Group>
      </div>

      {/* selection toolbar */}
      <div className="flex h-[33px] shrink-0 pt-[3px]">
        <div className="flex h-[29px] w-[400px] items-center bg-linear-to-b from-[#f1f6fc] to-[#dfe9f5]">
          <div className="ml-[4px] flex flex-col gap-[2px]">
            {[0, 1, 2, 3, 4].map((i) => (
              <span key={i} className="h-[2px] w-[2px] bg-[#8fa4c0]" />
            ))}
          </div>
          <span className="ml-[5px] flex"><Svg s={18}>{I.hand}</Svg></span>
          <span className="ml-[3px] flex h-[22px] w-[22px] items-center justify-center rounded-[2px] border border-[#d9a52e] bg-[#fde38d]"><Svg s={17}>{I.arrow}</Svg></span>
          <span className="ml-[5px] flex"><Svg s={17}>{I.arrowSel}</Svg></span>
          <Combo label="Any" w="ml-[1px] w-[144px]" />
          <Combo label="Default" w="ml-[6px] w-[145px]" />
          <span className="ml-[6px] flex"><Svg s={17}>{I.net}</Svg></span>
        </div>
      </div>

      {/* document tabs */}
      <div className="flex h-[23px] shrink-0 border-t border-[#7f98b8] bg-linear-to-b from-[#dfe9f5] to-[#e9f1fa]">
        <div className="ml-[27px] flex h-[22px] w-[109px]">
          <svg width="21" height="22" viewBox="0 0 21 22" className="shrink-0">
            <path d="M0 22L21 0v22z" fill="#fff" />
            <path d="M0 22L21 0" stroke="#3d4c61" fill="none" />
          </svg>
          <div className="flex flex-1 items-center border-r border-t border-[#3d4c61] bg-white pl-[14px]">
            <span className="w-[59px] font-semibold whitespace-nowrap text-black">Scene1*</span>
            <svg width="9" height="9" viewBox="0 0 9 9"><path d="M1 1l7 7M8 1L1 8" stroke="#555" /></svg>
          </div>
        </div>
        <span className="ml-auto mr-[7px] mt-[9px] h-0 border-x-[5px] border-t-[5px] border-x-transparent border-t-[#777]" />
      </div>

      {/* main */}
      <div className="flex min-h-0 flex-1">
        <div className="flex w-[25px] shrink-0 flex-col pt-[165px]">
          <div className="rounded-tl-[2px] bg-linear-to-r from-[#dfe9f5] to-[#eef4fb]">
            <Grip />
            <Tool>{grayCube}</Tool>
            <Tool>{grayCube}</Tool>
            <div className="mx-[3px] my-[3px] h-px bg-[#c2cedd]" />
            <Tool>{grayCube}</Tool>
            <Tool>{grayCube}</Tool>
            <Tool>{grayCube}</Tool>
            <div className="h-[1px]" />
          </div>
          <Handle />
          <div className="bg-linear-to-r from-[#dfe9f5] to-[#eef4fb]">
            <Grip />
            {[0, 1, 2, 3, 4, 5, 6, 7, 8, 9].map((k) => (
              <Tool key={k}>{blueFace(k)}</Tool>
            ))}
          </div>
          <Handle />
          <div className="bg-linear-to-r from-[#dfe9f5] to-[#eef4fb]">
            <Grip />
            {dims.map((d, k) => (
              <Tool key={k}>{d}</Tool>
            ))}
            <div className="mx-[3px] my-[3px] h-px bg-[#aab8c9]" />
            <Tool><path d="M3 18l2-8c2-4 6-5 10-5" fill="none" stroke="#24508e" strokeWidth="2" /></Tool>
            <Tool><rect x="6" y="2" width="8" height="16" fill="#555" /></Tool>
          </div>
          <Handle />
        </div>
        <div className="ml-[2px] flex w-[210px] shrink-0 flex-col">
          <div className="flex h-[22px] shrink-0 items-center pl-[3px] text-[#3e5270]">
            <span className="flex-1">Scene</span>
            <svg width="10" height="10" viewBox="0 0 10 10" className="mr-[9px]"><path d="M3 1h4v4l1 1H2l1-1zM5 6v4" fill="none" stroke="#5f6f84" /></svg>
            <svg width="10" height="10" viewBox="0 0 10 10" className="mr-[6px]"><path d="M1 1l8 8M9 1L1 9" stroke="#5f6f84" /></svg>
          </div>
          <div className="flex min-h-0 flex-1 flex-col border border-[#5f7fa8] bg-[#c9d8ec] p-[1px] pb-[1px]">
            <div className="flex h-[20px] shrink-0 items-center justify-end bg-white">
              <span className="flex h-[19px] w-[18px] items-center justify-center bg-[#ece7dc]">
                <svg width="14" height="14" viewBox="0 0 14 14"><path d="M1 1l12 12M13 1L1 13" stroke="#d02020" strokeWidth="1.800" /></svg>
              </span>
              <span className="ml-[2px] flex h-[19px] w-[18px] items-center justify-center bg-[#ece7dc]">
                <Svg s={17}>{I.tree}</Svg>
              </span>
            </div>
            <div className="min-h-0 flex-1 border border-[#9a9a9a] bg-white pl-[3px] pt-[1px]">
              {nodes.map((n, i) => (
                <TreeRow key={i} n={n} />
              ))}
            </div>
          </div>
          <div className="flex h-[22px] shrink-0 items-center pb-[1px] pl-[3px] pt-[1px] text-[#3e5270]">
            <div className="flex h-full w-[55px] items-center bg-white pl-[2px]">
              <Svg s={16}>{I.tree}</Svg>
              <span className="ml-[3px]">Scene</span>
            </div>
            <div className="ml-[6px] flex items-center">
              <Svg s={16}>{I.props}</Svg>
              <span className="ml-[3px]">Properties</span>
            </div>
            <div className="ml-[10px] flex items-center">
              <Svg s={16}>{I.search}</Svg>
              <span className="ml-[3px]">Search</span>
            </div>
          </div>
        </div>
        <div className="ml-[5px] min-w-0 flex-1 border-b-2 border-l border-t border-b-white border-l-[#6f7276] border-t-[#2d4f7d] bg-linear-to-b from-[#4f76a4] via-[#a9bdd6] via-50% to-white">
          <Model />
        </div>
      </div>

      {/* catalog tab */}
      <div className="flex h-[26px] shrink-0 items-end pl-[4px]">
        <div className="flex h-[22px] w-[110px] items-center border border-[#c8b98a] bg-[#fbe9b4] pl-[3px] whitespace-nowrap text-[#6d6a60]">
          <svg width="14" height="14" viewBox="0 0 14 14"><rect x="1" y="1" width="11" height="12" fill="#fff" stroke="#444" /><path d="M4 4h2v2H4zM8 4h2v2H8zM4 8h2v2H4zM8 8h2v2H8z" fill="#444" /></svg>
          <span className="ml-[3px]">Catalog Browser</span>
        </div>
      </div>

      {/* status bar */}
      <div className="flex h-[24px] shrink-0 items-center border-t border-[#8ea5c3] bg-linear-to-b from-[#d7e2f0] to-[#bfd0e5] text-[#36475f]">
        <span className="ml-[2px] w-[914px] shrink-0">For Help, press F1</span>
        <span className="w-[137px] shrink-0 whitespace-nowrap">View size: 1437 x&nbsp; 755</span>
        <span className="w-[92px] shrink-0">Units: in, deg</span>
        <div className="flex shrink-0 items-center">
          {bottomIcons.map((b, i) => (
            <span key={i} className={`flex shrink-0 items-center ${b.w}`}>
              <span className={b.on ? "flex h-[21px] items-center rounded-[2px] border border-[#d9a52e] bg-[#fde38d] px-[2px]" : "flex items-center"}>
                <Svg s={18}>{b.c}</Svg>
                {b.caret && <span className={b.on ? "ml-[2px] border-x-[3px] border-t-[3px] border-x-transparent border-t-[#777]" : "ml-[6px] border-x-[3px] border-t-[3px] border-x-transparent border-t-[#777]"} />}
              </span>
            </span>
          ))}
        </div>
        <Combo label="Any" w="ml-[2px] h-[21px] w-[88px]" pad="pl-[2px]" />
        <Combo label="Default" w="ml-[2px] h-[21px] w-[64px]" pad="pl-[2px]" />
        <span className="ml-[4px] flex"><Svg s={17}>{I.net}</Svg></span>
      </div>
    </div>
  );
}
